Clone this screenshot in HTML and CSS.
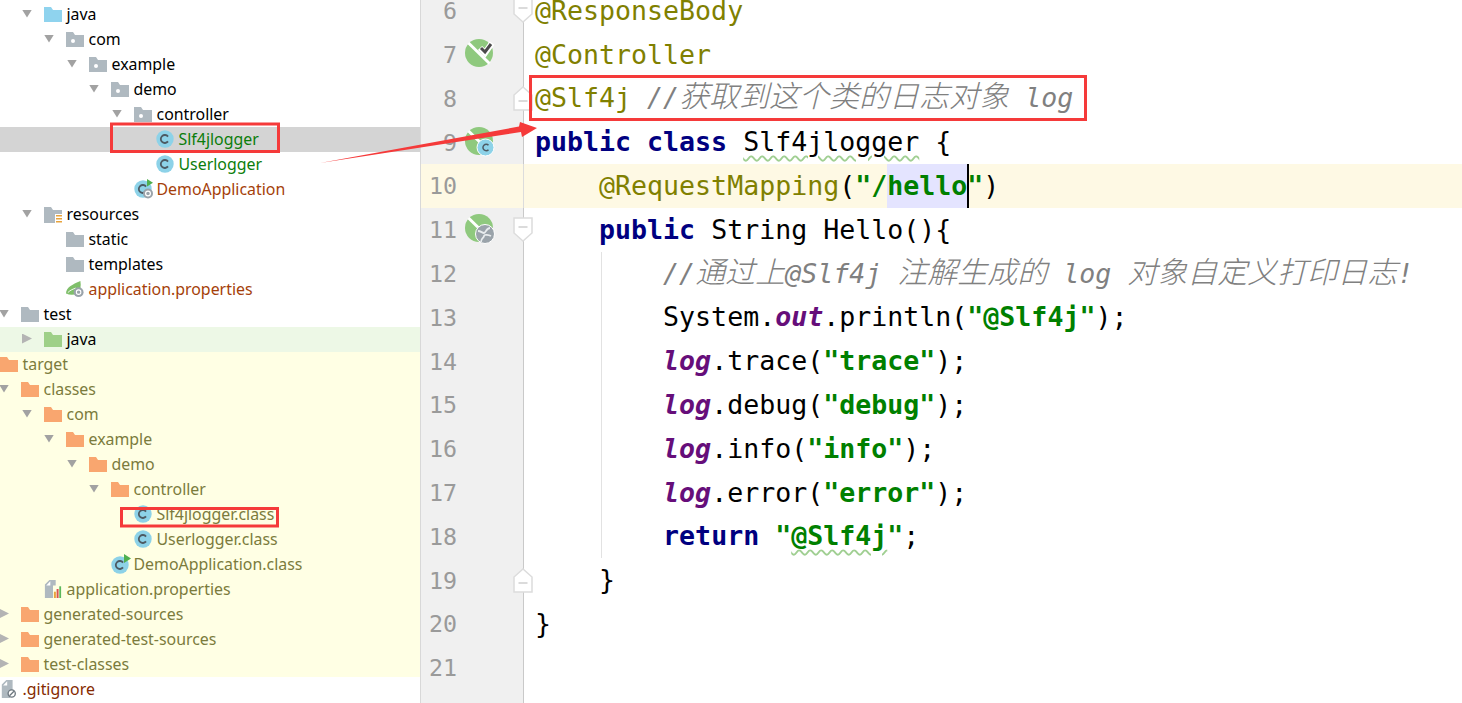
FILE: index.html
```html
<!DOCTYPE html>
<html lang="en">
<head>
<meta charset="utf-8">
<title>Slf4jlogger</title>
<link rel="stylesheet" href="styles.css">
</head>
<body>
<svg class="sprite" aria-hidden="true">
  <defs>
    <symbol id="folder" viewBox="0 0 18 16"><path d="M0 1h7l2 3h9v12H0z"/></symbol>
    <symbol id="pkg" viewBox="0 0 18 16"><path fill="#afb9c0" d="M0 1h7l2 3h9v12H0z"/><circle cx="7" cy="10" r="2" fill="#fff"/></symbol>
    <symbol id="res" viewBox="0 0 18 18"><path fill="#afb9c0" d="M0 2h7l2 3h9v4h-7v9H0z"/><path fill="#e8a33c" d="M12 10h6v1.5h-6zM12 13h6v1.5h-6zM12 16h6v1.5h-6z"/></symbol>
    <symbol id="cls" viewBox="0 0 18 18"><circle cx="9" cy="9" r="8.7" fill="#8dd2e8"/><path d="M12 6.6A4 4 0 1 0 12 11.4" fill="none" stroke="#4d5a63" stroke-width="1.8"/></symbol>
    <symbol id="run" viewBox="0 0 20 20"><circle cx="9" cy="11" r="8.7" fill="#8dd2e8"/><path d="M12 8.6A4 4 0 1 0 12 13.4" fill="none" stroke="#4d5a63" stroke-width="1.8"/><path fill="#4fb04f" d="M13 0l7 4.5-7 4.5z"/></symbol>
    <symbol id="runboot" viewBox="0 0 20 20"><circle cx="9" cy="10" r="8.7" fill="#8dd2e8"/><path d="M12 7.6A4 4 0 1 0 12 12.4" fill="none" stroke="#4d5a63" stroke-width="1.8"/><path fill="#4fb04f" d="M13 0l6 3.8-6 3.8z"/><circle cx="14" cy="14.500" r="5" fill="#9aa3aa"/><circle cx="14" cy="14.500" r="2.400" fill="none" stroke="#fff" stroke-width="1.200"/></symbol>
    <symbol id="leaf" viewBox="0 0 20 18"><path fill="#7fbf6a" d="M0 14C0 7 7 4 16 0c1 6 0 11-3 14-4 2-9 2-13 0z"/><path d="M2 13c3-3 6-4 9-5" stroke="#fff" fill="none"/><circle cx="14" cy="12.500" r="5.500" fill="#9aa3aa"/><circle cx="14" cy="12.500" r="2.500" fill="none" stroke="#fff" stroke-width="1.200"/></symbol>
    <symbol id="bars" viewBox="0 0 18 20"><path fill="#afb9c0" d="M0 5l5-5h7v6h-3v14H0z"/><path fill="#fff" d="M1.500 6L6 1.500V6z"/><path fill="#e8a33c" d="M10 13h2.200v7H10z"/><path fill="#d9534f" d="M13 10h2.200v10H13z"/><path fill="#5cb85c" d="M16 7h2v13h-2z"/></symbol>
    <symbol id="ign" viewBox="0 0 16 20"><path fill="#afb9c0" d="M0 5l5-5h7v11h-3v9H0z"/><path fill="#fff" d="M1.500 6L6 1.500V6z"/><circle cx="11" cy="15" r="4" fill="#fff" stroke="#6e7880" stroke-width="1.500"/><path d="M8.500 17.500l5-5" stroke="#6e7880" stroke-width="1.500"/></symbol>
    <symbol id="bean" viewBox="0 0 28 28"><circle cx="14" cy="14" r="14" fill="#8fc97e"/><path d="M3.500 4l21 20.500" stroke="#fff" stroke-width="3"/></symbol>
    <symbol id="fold-down" viewBox="0 0 20 26"><path d="M1 1h18v15l-9 8-9-8z" fill="#fff" stroke="#dcdcdc" stroke-width="1.500"/><path d="M5.500 10h9" stroke="#cfcfcf" stroke-width="1.500"/></symbol>
    <symbol id="fold-up" viewBox="0 0 20 26"><path d="M1 25h18V10l-9-8-9 8z" fill="#fff" stroke="#dcdcdc" stroke-width="1.500"/><path d="M5.500 16h9" stroke="#cfcfcf" stroke-width="1.500"/></symbol>
  </defs>
</svg>

<div class="screen">
  <aside class="tree">
    <div class="row l2"><i class="arrow down"></i><svg class="ic f-blue"><use href="#folder"/></svg><span>java</span></div>
    <div class="row l3"><i class="arrow down"></i><svg class="ic"><use href="#pkg"/></svg><span>com</span></div>
    <div class="row l4"><i class="arrow down"></i><svg class="ic"><use href="#pkg"/></svg><span>example</span></div>
    <div class="row l5"><i class="arrow down"></i><svg class="ic"><use href="#pkg"/></svg><span>demo</span></div>
    <div class="row l6"><i class="arrow down"></i><svg class="ic"><use href="#pkg"/></svg><span>controller</span></div>
    <div class="row l7 selected t-green"><svg class="ic"><use href="#cls"/></svg><span>Slf4jlogger</span></div>
    <div class="row l7 t-green"><svg class="ic"><use href="#cls"/></svg><span>Userlogger</span></div>
    <div class="row l6 t-brown"><svg class="ic wide"><use href="#runboot"/></svg><span>DemoApplication</span></div>
    <div class="row l2"><i class="arrow down"></i><svg class="ic"><use href="#res"/></svg><span>resources</span></div>
    <div class="row l3"><svg class="ic f-gray"><use href="#folder"/></svg><span>static</span></div>
    <div class="row l3"><svg class="ic f-gray"><use href="#folder"/></svg><span>templates</span></div>
    <div class="row l3 t-brown"><svg class="ic"><use href="#leaf"/></svg><span>application.properties</span></div>
    <div class="row l1"><i class="arrow down"></i><svg class="ic f-gray"><use href="#folder"/></svg><span>test</span></div>
    <div class="row l2 tested"><i class="arrow right"></i><svg class="ic f-green"><use href="#folder"/></svg><span>java</span></div>
    <div class="ignored">
      <div class="row l0"><svg class="ic f-orange"><use href="#folder"/></svg><span>target</span></div>
      <div class="row l1"><i class="arrow down"></i><svg class="ic f-orange"><use href="#folder"/></svg><span>classes</span></div>
      <div class="row l2"><i class="arrow down"></i><svg class="ic f-orange"><use href="#folder"/></svg><span>com</span></div>
      <div class="row l3"><i class="arrow down"></i><svg class="ic f-orange"><use href="#folder"/></svg><span>example</span></div>
      <div class="row l4"><i class="arrow down"></i><svg class="ic f-orange"><use href="#folder"/></svg><span>demo</span></div>
      <div class="row l5"><i class="arrow down"></i><svg class="ic f-orange"><use href="#folder"/></svg><span>controller</span></div>
      <div class="row l6"><svg class="ic"><use href="#cls"/></svg><span>Slf4jlogger.class</span></div>
      <div class="row l6"><svg class="ic"><use href="#cls"/></svg><span>Userlogger.class</span></div>
      <div class="row l5"><svg class="ic wide"><use href="#run"/></svg><span>DemoApplication.class</span></div>
      <div class="row l2"><svg class="ic"><use href="#bars"/></svg><span>application.properties</span></div>
      <div class="row l1"><i class="arrow right"></i><svg class="ic f-orange"><use href="#folder"/></svg><span>generated-sources</span></div>
      <div class="row l1"><i class="arrow right"></i><svg class="ic f-orange"><use href="#folder"/></svg><span>generated-test-sources</span></div>
      <div class="row l1"><i class="arrow right"></i><svg class="ic f-orange"><use href="#folder"/></svg><span>test-classes</span></div>
    </div>
    <div class="row l0 t-maroon"><svg class="ic"><use href="#ign"/></svg><span>.gitignore</span></div>
  </aside>

  <main class="editor">
    <div class="line"><div class="gutter"><span class="num">6</span></div><svg class="fold"><use href="#fold-down"/></svg><code class="code"><b class="ann">@ResponseBody</b></code></div>
    <div class="line"><div class="gutter"><span class="num">7</span><svg class="gicon" viewBox="0 0 28 28"><use href="#bean" width="28" height="28"/><path d="M15 9l5 5 7-10" fill="none" stroke="#fff" stroke-width="6"/><path d="M16 9l4 4 6-8" fill="none" stroke="#4b4b4b" stroke-width="3"/></svg></div><code class="code"><b class="ann">@Controller</b></code></div>
    <div class="line"><div class="gutter"><span class="num">8</span></div><svg class="fold"><use href="#fold-up"/></svg><code class="code"><b class="ann">@Slf4j</b> <em class="cmt">//<span class="cjk">获取到这个类的日志对象</span> log</em></code></div>
    <div class="line"><div class="gutter"><span class="num">9</span><svg class="gicon" viewBox="0 0 28 28"><use href="#bean" width="28" height="28"/><circle cx="20.500" cy="20.500" r="8.500" fill="#8dd2e8" stroke="#fff"/><path d="M23.500 18.300A3.200 3.200 0 1 0 23.500 22.700" fill="none" stroke="#4d5a63" stroke-width="1.500"/></svg></div><code class="code"><b class="kw">public class</b> <span class="wavy">Slf4jlogger</span> {</code></div>
    <div class="line current"><div class="gutter"><span class="num">10</span></div><code class="code">    <b class="ann">@RequestMapping</b>(<b class="str">"/<span class="sel">hello</span>"</b>)</code></div>
    <div class="line"><div class="gutter"><span class="num">11</span><svg class="gicon" viewBox="0 0 28 28"><use href="#bean" width="28" height="28"/><circle cx="20" cy="20" r="9.500" fill="#9aa3aa" stroke="#fff"/><path d="M13 17c3 0 4 2 6 2s2-5 6-5M16 28c0-4 3-4 3-6s5-1 7 0" fill="none" stroke="#e8ecee" stroke-width="1.800"/></svg></div><svg class="fold"><use href="#fold-down"/></svg><code class="code">    <b class="kw">public</b> String Hello(){</code></div>
    <div class="line"><div class="gutter"><span class="num">12</span></div><code class="code guide">        <em class="cmt">//<span class="cjk">通过上</span>@Slf4j <span class="cjk">注解生成的</span> log <span class="cjk">对象自定义打印日志</span>!</em></code></div>
    <div class="line"><div class="gutter"><span class="num">13</span></div><code class="code guide">        System.<b class="fld">out</b>.println(<b class="str">"@Slf4j"</b>);</code></div>
    <div class="line"><div class="gutter"><span class="num">14</span></div><code class="code guide">        <b class="fld">log</b>.trace(<b class="str">"trace"</b>);</code></div>
    <div class="line"><div class="gutter"><span class="num">15</span></div><code class="code guide">        <b class="fld">log</b>.debug(<b class="str">"debug"</b>);</code></div>
    <div class="line"><div class="gutter"><span class="num">16</span></div><code class="code guide">        <b class="fld">log</b>.info(<b class="str">"info"</b>);</code></div>
    <div class="line"><div class="gutter"><span class="num">17</span></div><code class="code guide">        <b class="fld">log</b>.error(<b class="str">"error"</b>);</code></div>
    <div class="line"><div class="gutter"><span class="num">18</span></div><code class="code guide">        <b class="kw">return</b> <b class="str">"<span class="wavy">@Slf4j</span>"</b>;</code></div>
    <div class="line"><div class="gutter"><span class="num">19</span></div><svg class="fold"><use href="#fold-up"/></svg><code class="code">    }</code></div>
    <div class="line"><div class="gutter"><span class="num">20</span></div><code class="code">}</code></div>
    <div class="line"><div class="gutter"><span class="num">21</span></div><code class="code"></code></div>
    <div class="line"><div class="gutter"></div><code class="code"></code></div>
  </main>
</div>

<svg class="markup" viewBox="0 0 1462 703" aria-hidden="true">
  <g fill="none" stroke="#f53a3a" stroke-width="3">
    <rect x="111.500" y="124" width="167" height="27.500"/>
    <rect x="121.500" y="508.500" width="156" height="17.500"/>
    <rect x="530.500" y="76.500" width="555" height="43"/>
  </g>
  <path fill="#f53a3a" d="M320 163L519 126.500 520 122 537 128 522 137 521 132z"/>
</svg>
</body>
</html>
```
FILE: styles.css
```css
* { box-sizing: border-box; }
html, body { margin: 0; height: 100%; overflow: hidden; background: #fff; }
.sprite { width: 0; height: 0; position: absolute; }
.screen { display: flex; width: 1462px; height: 703px; overflow: hidden; }

/* project tree */
.tree {
  width: 420px; flex: none; padding-top: 2px;
  font-family: "Noto Sans", "Open Sans", sans-serif; font-size: 15.9px; color: #000;
}
.row { display: flex; align-items: center; height: 25px; padding-bottom: 2px; white-space: nowrap; }
.l0 { padding-left: 0; }
.l1 { padding-left: 21px; }
.l2 { padding-left: 44px; }
.l3 { padding-left: 66px; }
.l4 { padding-left: 89px; }
.l5 { padding-left: 111px; }
.l6 { padding-left: 134px; }
.l7 { padding-left: 156px; }
.selected { background: #d4d4d4; }
.tested { background: #edf8e6; }
.ignored { background: #ffffe4; color: #7b7b3c; }
.t-green { color: #0b7d0b; }
.t-brown { color: #a53f0a; }
.t-maroon { color: #852a00; }

.arrow { width: 10px; flex: none; margin-left: -22px; margin-right: 12px; }
.arrow.down { height: 8px; background: #a2a2a2; clip-path: polygon(0 0, 100% 0, 50% 100%); }
.arrow.right { height: 10px; background: #b4b4b4; clip-path: polygon(0 0, 100% 50%, 0 100%); }
.ic { width: 18px; height: 18px; flex: none; margin-right: 4.5px; overflow: visible; }
.ic.wide { width: 20px; height: 20px; margin-left: 0; margin-right: 2.5px; }
.f-blue { fill: #8fd3ee; }
.f-gray { fill: #afb9c0; }
.f-green { fill: #9ed088; }
.f-orange { fill: #f9a66f; }

/* editor */
.editor { flex: 1; margin-top: -11.2px; border-left: 1px solid #d8d8d8; font-family: "DejaVu Sans Mono", monospace; }
.line { display: flex; height: 43.8px; position: relative; }
.gutter {
  width: 103px; flex: none; display: flex; align-items: center;
  background: #f0f0f0; border-right: 1px solid #c9c9c9;
}
.num { width: 36px; flex: none; text-align: right; color: #9a9a9a; font-size: 23.3px; }
.gicon { width: 28px; height: 28px; flex: none; margin-left: 8px; margin-bottom: 3px; overflow: visible; }
.fold { position: absolute; left: 92px; top: 9px; width: 20px; height: 26px; }
.code {
  display: block; flex: 1; padding-left: 11px; white-space: pre;
  font-family: inherit; font-size: 26.6px; line-height: 43.8px; color: #000;
}
.guide { background: linear-gradient(#e2e2e2, #e2e2e2) 77px 0 / 1px 100% no-repeat; }
.current, .current .gutter { background: #fef9e4; }
.current .gutter { border-right-color: #dcdcdc; }
.ann { color: #808000; font-weight: normal; }
.kw { color: #000080; font-weight: bold; }
.str { color: #008000; font-weight: bold; }
.fld { color: #660e7a; font-weight: bold; font-style: italic; }
.cmt { color: #808080; font-style: italic; }
.cjk { font-family: "Noto Sans CJK SC", sans-serif; font-size: 30px; font-weight: 300; line-height: 1; }
.sel { display: inline-block; line-height: 43.8px; background: #e4e4ff; border-right: 2px solid #000; margin-right: -2px; }
.wavy { text-decoration: underline wavy #a0cf92 1.5px; text-underline-offset: 4px; }

/* annotations drawn on the screenshot */
.markup { position: absolute; left: 0; top: 0; width: 1462px; height: 703px; pointer-events: none; }
```
